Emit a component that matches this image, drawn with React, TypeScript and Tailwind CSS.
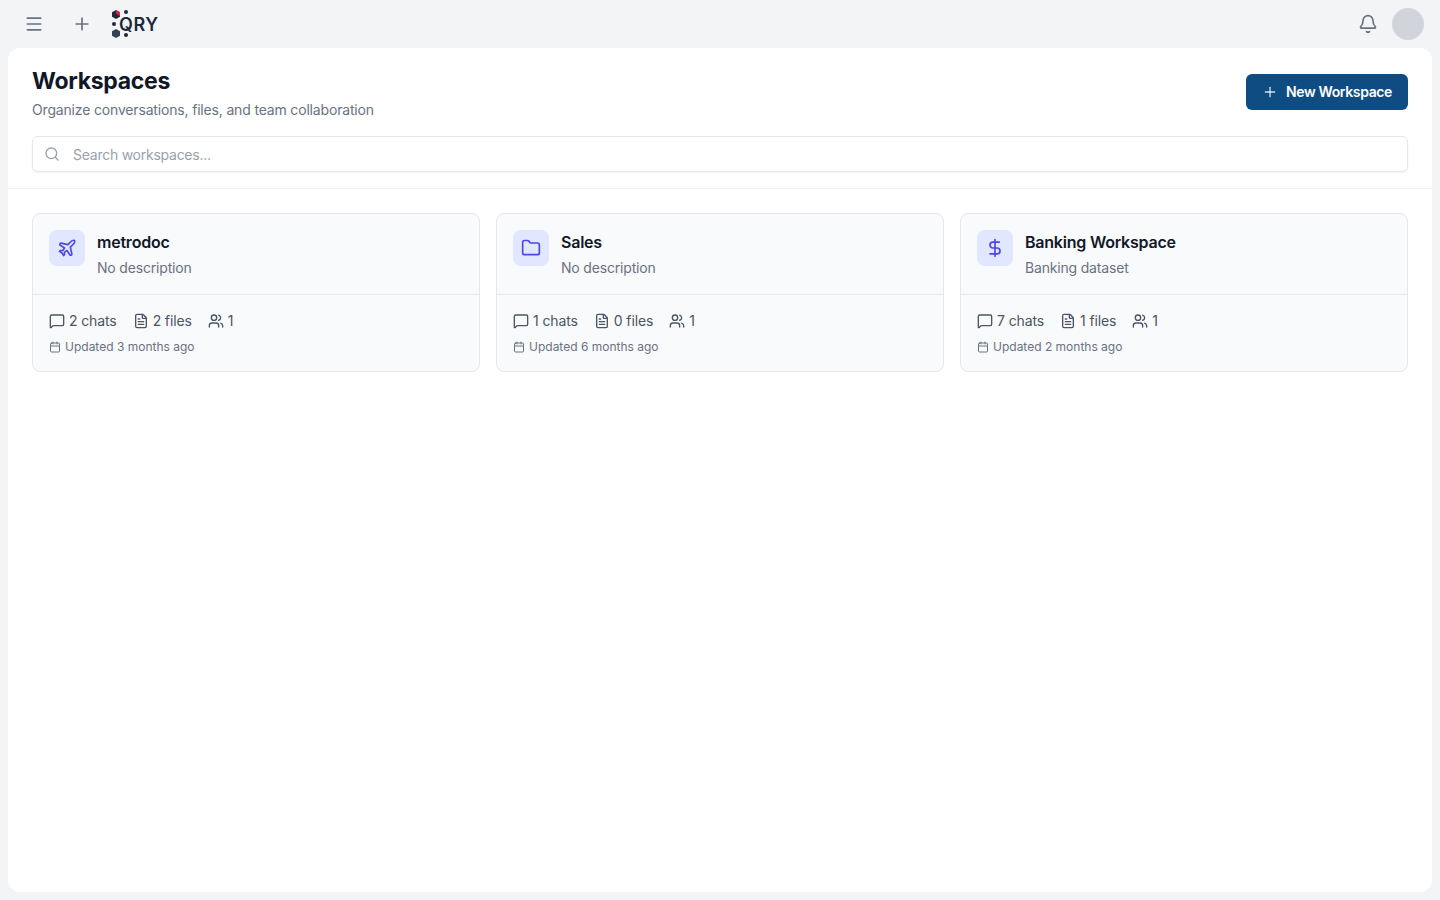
import { Bell, Calendar, DollarSign, FileText, Folder, Menu, MessageSquare, Plane, Plus, Search, Users } from "lucide-react";
import type { ComponentType } from "react";

interface Workspace {
  name: string;
  description: string;
  chats: number;
  files: number;
  members: number;
  updated: string;
  icon: ComponentType<{ size?: number; className?: string; strokeWidth?: number }>;
}

const workspaces: Workspace[] = [
  { name: "metrodoc", description: "No description", chats: 2, files: 2, members: 1, updated: "Updated 3 months ago", icon: Plane },
  { name: "Sales", description: "No description", chats: 1, files: 0, members: 1, updated: "Updated 6 months ago", icon: Folder },
  { name: "Banking Workspace", description: "Banking dataset", chats: 7, files: 1, members: 1, updated: "Updated 2 months ago", icon: DollarSign },
];

function Logo() {
  return (
    <div className="flex items-center relative w-[48px] h-[30px]">
      <svg width="20" height="30" viewBox="0 0 20 30" className="absolute left-0 top-0">
        <polygon points="4,1 8,3.2 8,7.8 4,10 0,7.8 0,3.2" fill="#1e293b" />
        <polygon points="4,1 8,3.2 8,7 4,4.8" fill="#e11d48" />
        <circle cx="14" cy="3" r="2" fill="#1e293b" />
        <circle cx="2" cy="15" r="2" fill="#1e293b" />
        <polygon points="4,20 8,22.2 8,26.8 4,29 0,26.8 0,22.2" fill="#334155" />
        <circle cx="14" cy="26" r="2" fill="#1e293b" />
      </svg>
      <span className="absolute left-[7px] top-[5px] text-[18px] leading-[22px] font-semibold text-[#1e293b] tracking-[0.5px]">QRY</span>
    </div>
  );
}

function WorkspaceCard({ workspace }: { workspace: Workspace }) {
  const Icon = workspace.icon;
  return (
    <div className="border border-gray-200 rounded-lg bg-[#f9fafc]">
      <div className="flex gap-3 p-4 h-[81px] border-b border-gray-200">
        <div className="w-9 h-9 rounded-lg bg-[#e0e7ff] flex items-center justify-center shrink-0">
          <Icon size={20} className="text-[#4f46e5]" />
        </div>
        <div>
          <div className="text-base leading-6 font-semibold text-gray-900 tracking-[-0.22px]">{workspace.name}</div>
          <div className="text-sm leading-5 mt-[4px] text-gray-500 tracking-[-0.18px]">{workspace.description}</div>
        </div>
      </div>
      <div className="px-4 pt-4 pb-4 h-[76px]">
        <div className="flex items-center gap-4 text-sm leading-5 text-gray-600 tracking-[-0.12px]">
          <span className="flex items-center gap-1">
            <MessageSquare size={16} />
            {workspace.chats} chats
          </span>
          <span className="flex items-center gap-1">
            <FileText size={16} />
            {workspace.files} files
          </span>
          <span className="flex items-center gap-1">
            <Users size={16} />
            {workspace.members}
          </span>
        </div>
        <div className="flex items-center gap-1 mt-[8px] text-xs leading-4 text-gray-500">
          <Calendar size={12} />
          {workspace.updated}
        </div>
      </div>
    </div>
  );
}

export default function App() {
  return (
    <div className="h-[900px] bg-[#f3f4f6] flex flex-col font-['Inter',sans-serif] overflow-hidden">
      {/* Top bar */}
      <div className="h-12 shrink-0 flex items-center justify-between pl-6 pr-4">
        <div className="flex items-center">
          <Menu size={20} className="text-gray-500" />
          <Plus size={20} className="text-gray-500 ml-7" />
          <div className="ml-[20px]">
            <Logo />
          </div>
        </div>
        <div className="flex items-center gap-[14px]">
          <Bell size={20} className="text-gray-500" />
          <div className="w-8 h-8 rounded-full bg-[#d1d5db]" />
        </div>
      </div>

      {/* Main panel */}
      <div className="flex-1 mx-2 mb-2 bg-white rounded-xl">
        <div className="px-6 pt-[17px] pb-4 border-b border-[#eceef1]">
          <div className="flex items-start justify-between">
            <div>
              <h1 className="text-[23px] font-bold leading-8 text-gray-900 tracking-[-0.3px]">Workspaces</h1>
              <p className="text-sm leading-5 mt-[3px] text-gray-500 tracking-[-0.17px]">Organize conversations, files, and team collaboration</p>
            </div>
            <button className="flex items-center gap-2 h-9 px-4 mt-[9px] rounded-md bg-[#0f4c81] text-white text-sm font-semibold tracking-[-0.38px]">
              <Plus size={16} className="text-white/80" />
              New Workspace
            </button>
          </div>
          <div className="mt-4 h-9 flex items-center gap-[13px] pl-[11px] pr-3 border border-gray-200 rounded-md bg-white shadow-xs">
            <Search size={16} className="text-gray-400" />
            <span className="text-sm text-gray-400 tracking-[-0.25px] mt-[2px]">Search workspaces...</span>
          </div>
        </div>
        <div className="grid grid-cols-3 gap-4 p-6">
          {workspaces.map((w) => (
            <WorkspaceCard key={w.name} workspace={w} />
          ))}
        </div>
      </div>
    </div>
  );
}
